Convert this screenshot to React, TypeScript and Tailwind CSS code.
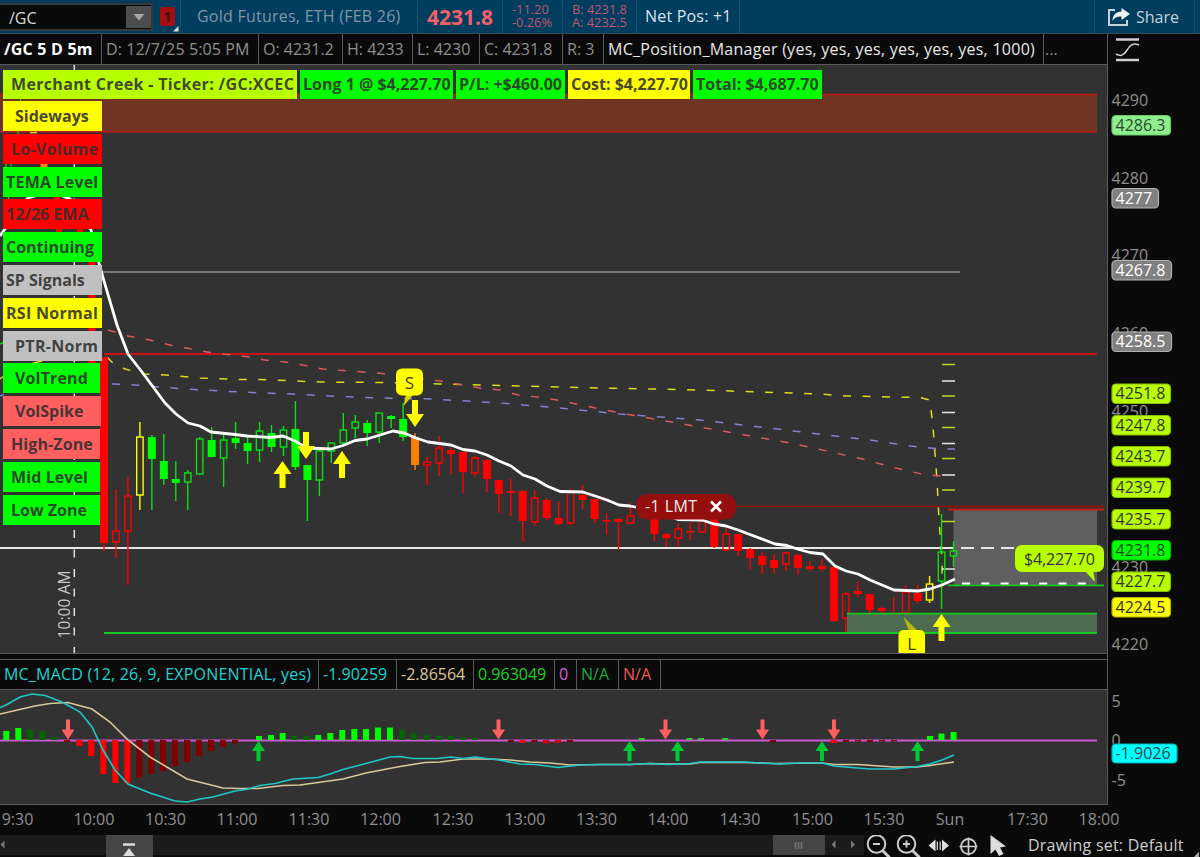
import React from 'react';
import clsx from 'clsx';

type Candle = [number, number, number, number, string, boolean];

const GREEN = '#08e010';
const RED = '#f00';

// high, body top, body bottom, low, colour, filled
const CANDLES: (Candle | null)[] = [
  [357, 357, 543, 551, RED, true],
  [489, 531, 542, 558, RED, false],
  [477, 496, 531, 585, RED, false],
  [422, 437, 495, 510, '#ff0', false],
  [435, 437, 459, 510, GREEN, true],
  [434, 461, 479, 485, GREEN, true],
  [461, 479, 483, 501, GREEN, true],
  [470, 473, 482, 510, GREEN, false],
  [437, 439, 474, 474, GREEN, false],
  [427, 440, 457, 457, GREEN, true],
  [432, 440, 458, 487, GREEN, false],
  [422, 438, 443, 449, GREEN, true],
  [435, 443, 451, 464, GREEN, true],
  [422, 431, 450, 462, GREEN, false],
  [425, 433, 447, 452, GREEN, true],
  [426, 430, 447, 456, GREEN, false],
  [401, 429, 467, 470, GREEN, true],
  [465, 465, 480, 521, GREEN, true],
  [449, 451, 480, 496, GREEN, false],
  [443, 443, 451, 463, GREEN, false],
  [413, 430, 443, 445, GREEN, false],
  [415, 422, 428, 438, GREEN, false],
  [420, 423, 433, 446, GREEN, true],
  [413, 413, 432, 443, GREEN, false],
  [415, 416, 419, 428, GREEN, true],
  [403, 419, 437, 441, GREEN, true],
  [433, 437, 465, 470, '#ff7f00', true],
  [457, 462, 465, 485, RED, false],
  [436, 448, 463, 476, RED, false],
  [448, 450, 454, 474, RED, true],
  [452, 452, 472, 493, RED, true],
  [456, 458, 473, 477, RED, false],
  [459, 460, 479, 492, RED, true],
  [480, 480, 494, 513, RED, true],
  [479, 491, 493, 516, RED, true],
  [490, 491, 521, 542, RED, true],
  [490, 498, 522, 526, RED, false],
  [498, 500, 518, 520, RED, true],
  [501, 518, 524, 525, RED, true],
  [489, 491, 523, 525, RED, false],
  [485, 495, 500, 509, RED, true],
  [499, 499, 519, 523, RED, true],
  [513, 520, 521.5, 535, RED, true],
  [519, 519, 522, 550, RED, true],
  [503, 516, 523, 524, RED, false],
  null,
  [515, 515, 534, 541, RED, true],
  [533, 534, 538, 547, RED, true],
  [523, 529, 538, 546, RED, false],
  [522, 531, 532.5, 540, RED, true],
  [519, 521, 532, 533, RED, false],
  [518, 518, 547, 548, RED, true],
  [528, 534, 550, 551, RED, false],
  [534, 534, 551, 556, RED, true],
  [548, 549, 558, 569, RED, true],
  [552, 556, 565, 574, RED, true],
  [554, 560, 568, 574, RED, true],
  [552, 553, 564, 571, RED, false],
  [554, 555, 568, 575, RED, true],
  [561, 566, 569, 571, RED, true],
  [559, 566, 569, 571, RED, true],
  [567, 567, 621, 622, RED, true],
  [592, 594, 618, 632, RED, false],
  [582, 591, 594, 597, RED, true],
  [594, 594, 610, 613, RED, true],
  [607, 608, 611, 621, RED, true],
  [597, 613, 617, 618, RED, true],
  [585, 592, 613, 614, RED, false],
  [585, 593, 601, 603, RED, true],
  [576, 584, 600, 603, '#ff0', false],
  [514, 552, 581, 609, GREEN, false],
  [541, 551, 556, 567, GREEN, false],
];

const candleX = (i: number) => 104 + i * 11.965;

const MA =
  '0,236 5,229 14,212 28,198 45,193 58,194 70,199 82,213 91,230 99,263 104,281 117,325 128,354 142,372 165,403 176,414 188,423 200,426 211,432 235,434.5 247,436 270,437.5 283,436 295,441 307,448 331,449 343,445.5 355,440.5 367,439 380,435 393,431 404,433 416,438 428,442 451,445 463,449.5 475,451 487,455 499,461 511,466 523,475 535,479 547,486 560,491.5 583,492 607,500 619,505 630,506 660,512 678,519.5 702,520 714,524 726,526 738,530 775,544 787,545.5 799,549.5 810,552.5 823,554 835,566 846,571 858,574 870,580 894,590 918,591 930,589 942,585 955,579';

const RED_AVG =
  '108,330 128,336 150,340 170,345 210,352.5 250,357 265,360 285,362 305,365.5 323,369 343,370.5 382,373.5 440,381 480,388 500,390 518,395 537,397 557,400 620,413 700,427 773,440 790,443 827,451 846,455.5 863,459 884,465 904,470 924,474.5 942,476';
const YELLOW_AVG =
  '107,357 113,363 125,369 145,374 165,375 200,378 240,379.5 260,379.5 320,382 380,382.5 440,384 500,385.5 600,388 700,390 820,394 845,396 920,397.5 930,400 933,427 937,480 939,520 942,560 942,580';
const BLUE_AVG =
  '112,384 135,385 185,389 240,392 291,394 330,396 380,398 430,399 500,403 560,408 620,414 700,420 760,427 827,435 870,440 910,446 930,448 942,449 955,449';

const TOP_TAGS = [
  { text: 'Merchant Creek - Ticker: /GC:XCEC', cls: 'w-[294px] bg-[#b8ff00] pl-2 tracking-[0.33px]' },
  { text: 'Long 1 @ $4,227.70', cls: 'w-[153px] bg-[#0f0] pl-[3px]' },
  { text: 'P/L: +$460.00', cls: 'w-[109px] bg-[#0f0] pl-[3px]' },
  { text: 'Cost: $4,227.70', cls: 'w-[122px] bg-[#ff0] pl-[3px]' },
  { text: 'Total: $4,687.70', cls: 'w-[129px] bg-[#0f0] pl-[3px]' },
];

const SIDE_TAGS = [
  { text: 'Sideways', cls: 'bg-[#ff0] w-[99px] pl-3' },
  { text: 'Lo-Volume', cls: 'bg-[#f00] w-[99px] pl-2 tracking-[0.25px]' },
  { text: 'TEMA Level', cls: 'bg-[#0f0] w-[99px] pl-[3px] tracking-[0.2px]' },
  { text: '12/26 EMA', cls: 'bg-[#f00] w-[99px] pl-[3px]' },
  { text: 'Continuing', cls: 'bg-[#0f0] w-[99px] pl-[3px]' },
  { text: 'SP Signals', cls: 'bg-[#c0c0c0] w-[99px] pl-[3px]' },
  { text: 'RSI Normal', cls: 'bg-[#ff0] w-[99px] pl-[3px] tracking-[0.3px]' },
  { text: 'PTR-Norm', cls: 'bg-[#c0c0c0] w-[99px] pl-3 tracking-[0.3px]' },
  { text: 'VolTrend', cls: 'bg-[#0f0] w-[97px] pl-3 tracking-[0.15px]' },
  { text: 'VolSpike', cls: 'bg-[#ff5f5f] w-[98px] pl-3' },
  { text: 'High-Zone', cls: 'bg-[#ff5f5f] w-[97px] pl-2 tracking-[0.1px]' },
  { text: 'Mid Level', cls: 'bg-[#0f0] w-[97px] pl-2 tracking-[0.1px]' },
  { text: 'Low Zone', cls: 'bg-[#0f0] w-[97px] pl-2' },
];

// x, height (negative = below zero), colour
const HIST: [number, number, string][] = [
  [6.3, 9, '#0f0'], [18.3, 12, '#0f0'], [30.3, 11, '#006400'], [42.3, 9, '#006400'], [54, 3, '#006400'],
  [67, -2, '#8b0000'], [79.3, -6, '#f00'], [91.3, -16, '#f00'], [103.3, -34, '#f00'], [115.3, -43, '#f00'],
  [127.3, -43, '#f00'], [139.3, -38, '#7f0000'], [151.3, -34, '#7f0000'], [163, -31, '#7f0000'],
  [175, -26, '#7f0000'], [187, -22, '#7f0000'], [199, -16, '#7f0000'], [211, -11, '#7f0000'],
  [223, -7, '#7f0000'], [235, -3, '#7f0000'], [259, 4, '#0f0'], [271, 5, '#0f0'], [282.7, 7, '#0f0'],
  [294.5, 4, '#006400'], [306.5, 4, '#006400'], [318.3, 5, '#0f0'], [330.3, 7, '#0f0'], [342.3, 10, '#0f0'],
  [354.3, 11, '#0f0'], [366, 11, '#0f0'], [378, 12.5, '#0f0'], [390, 12.5, '#0f0'], [402, 10, '#006400'],
  [413.7, 7, '#006400'], [427, 5, '#006400'], [439, 4, '#006400'], [451, 4, '#006400'], [463, 3, '#006400'],
  [475, 2, '#006400'], [511, -2, '#7f0000'], [522.5, -3, '#f00'], [534.5, -2, '#7f0000'], [546, -3.5, '#d00000'],
  [558, -3, '#d00000'], [570, -2, '#7f0000'], [641.7, 2, '#2fd02f'], [689.5, 2, '#2fd02f'], [701, 2, '#2fd02f'],
  [725.3, 2, '#2fd02f'], [773, -2, '#7f0000'], [834, -3, '#f00'], [846, -2, '#7f0000'], [858, -1.5, '#7f0000'],
  [870, -2, '#7f0000'], [882, -1.5, '#7f0000'], [894, -1.5, '#7f0000'], [930, 4, '#0f0'], [941.5, 6.5, '#0f0'],
  [953.5, 8, '#0f0'],
];

const MACD_LINE =
  '0,707.5 8,704 20,697 32,694 45,695.5 62,702 80,712 92,727 103,750 115,770 128,784 150,793 175,801 187,802 200,799 213,797 235,791 248,789 260,785.5 275,783.5 293,779 318,777.5 330,774 343,769.5 366,763.5 390,757 400,756.5 413,758.5 437,758.5 451,757 463,758.5 475,757 499,760 520,764 535,764.5 558,767.5 580,765 600,764.5 630,764.5 650,763.5 668,764.5 690,763.5 700,762 745,762 760,763 780,764 800,763 822,763 834,766 870,769 894,769 917,766.5 930,764 942,760 954,755';
const SIGNAL_LINE =
  '0,714 35,706 50,703.5 68,702.5 92,709 110,722 128,740 150,757 187,779 223,788 240,788.5 258,788.5 283,785.5 300,785 343,779 366,773 400,766.5 425,762.5 440,762 463,759 490,759 510,760 530,762 550,763 570,765 600,764.5 630,764.5 650,763.5 668,764 690,764 700,762.5 745,762.5 775,763.5 822,763 834,764.5 858,764.5 894,767 917,767 930,765.5 954,762';

const PRICES = [
  { y: 100, text: '4290' }, { y: 178, text: '4280' }, { y: 255, text: '4270' }, { y: 333, text: '4260' },
  { y: 411, text: '4250' }, { y: 567, text: '4230' }, { y: 644, text: '4220' },
];

const PRICE_TAGS = [
  { y: 125, text: '4286.3', fill: '#90ee90', stroke: '#66cc66', color: '#2b4a2b', w: 59 },
  { y: 198, text: '4277', fill: '#808080', stroke: '#b0b0b0', color: '#fff', w: 47 },
  { y: 270, text: '4267.8', fill: '#808080', stroke: '#b0b0b0', color: '#fff', w: 60 },
  { y: 341.5, text: '4258.5', fill: '#808080', stroke: '#b0b0b0', color: '#fff', w: 60 },
  { y: 393.5, text: '4251.8', fill: '#b8ff00', stroke: '#86bd00', color: '#333', w: 59 },
  { y: 425, text: '4247.8', fill: '#b8ff00', stroke: '#86bd00', color: '#333', w: 59 },
  { y: 456, text: '4243.7', fill: '#b8ff00', stroke: '#86bd00', color: '#333', w: 59 },
  { y: 487.5, text: '4239.7', fill: '#b8ff00', stroke: '#86bd00', color: '#333', w: 59 },
  { y: 519, text: '4235.7', fill: '#b8ff00', stroke: '#86bd00', color: '#333', w: 59 },
  { y: 550, text: '4231.8', fill: '#00ff00', stroke: '#00b400', color: '#1c4a1c', w: 59 },
  { y: 581.5, text: '4227.7', fill: '#b8ff00', stroke: '#86bd00', color: '#333', w: 59 },
  { y: 607, text: '4224.5', fill: '#ffff00', stroke: '#b4b400', color: '#333', w: 59 },
];

const TIMES: [number, string][] = [
  [17.5, '9:30'], [94, '10:00'], [165.5, '10:30'], [237, '11:00'], [309, '11:30'], [380.5, '12:00'],
  [453, '12:30'], [525, '13:00'], [596.5, '13:30'], [668, '14:00'], [740, '14:30'], [812.5, '15:00'],
  [884, '15:30'], [950, 'Sun'], [1027.5, '17:30'], [1099, '18:00'],
];

function YellowArrow({ x, y, down }: { x: number; y: number; down?: boolean }) {
  return (
    <path
      transform={`translate(${x} ${y})${down ? ' scale(1 -1)' : ''}`}
      d="M0 0L9 13H3V27H-3V13H-9Z"
      fill="#ff0"
    />
  );
}

function SmallArrow({ x, down }: { x: number; down?: boolean }) {
  return (
    <path
      transform={down ? `translate(${x} 739.5) scale(1 -1)` : `translate(${x} 741)`}
      d="M0 0L6.5 10H2V20H-2V10H-6.5Z"
      fill={down ? '#ff5f5f' : '#00c832'}
    />
  );
}

function TopBar() {
  return (
    <header className="flex h-[34px] shrink-0 border-b border-[#3a4a55] bg-[#003d5f] text-base whitespace-nowrap">
      <div className="mt-[3px] flex h-[28px] w-[153px] border-2 border-l-0 border-[#34383c] bg-[#0a0a0a]">
        <span className="flex-1 pl-[9px] leading-[26px] text-[#d8d8d8]">/GC</span>
        <span className="mt-px flex h-[22px] w-[25px] items-center justify-center bg-[#4d4d4d]">
          <svg width="12" height="7"><path d="M0.5 0H11.5L6 6.5Z" fill="#a8a8a8" /></svg>
        </span>
      </div>
      <div className="flex w-[28px] border-r border-[#14506f]">
        <div className="mt-[7px] ml-[7px] flex h-[19px] w-[15px] items-center justify-center rounded-[3px] bg-[#a50f12] text-[15px] font-bold text-[#4a1012]">1</div>
        <svg width="6" height="6" className="mt-[26px] -ml-0.5 shrink-0"><path d="M5.5 0V5.5H0Z" fill="#ddd" /></svg>
      </div>
      <div className="w-[237px] border-r border-[#14506f] pl-4 leading-[33px] tracking-[0.24px] text-[#8197a6]">Gold Futures, ETH (FEB 26)</div>
      <div className="w-[85px] border-r border-[#14506f] pl-[9px] text-[21px] leading-[35px] font-bold text-[#f25f68]">4231.8</div>
      <div className="w-[60px] border-r border-[#14506f] pt-[3px] pl-[9px] text-[12.8px] leading-[13px] text-[#c05570]">
        <div>-11.20</div>
        <div>-0.26%</div>
      </div>
      <div className="w-[74px] border-r border-[#14506f] pt-[3px] pl-[9px] text-[12.8px] leading-[13px] text-[#c05570]">
        <div>B: 4231.8</div>
        <div>A: 4232.5</div>
      </div>
      <div className="w-[103px] border-r border-[#14506f] pl-2 leading-[33px] tracking-[0.2px] text-[#dbe4ea]">Net Pos: +1</div>
      <div className="flex-1" />
      <div className="flex w-[101px] items-center border-x border-[#14506f] pl-3 text-[#c5d0d8]">
        <svg width="24" height="20" viewBox="0 0 24 20" className="mr-[5px]">
          <path d="M8 3H2V18H20V13" fill="none" stroke="#c5d0d8" strokeWidth="2" />
          <path d="M14.5 1L23 7L14.5 13V9.5C10 9.5 7.500 10.500 5.500 14C5.500 8 9 4.800 14.500 4.500Z" fill="#eef2f5" />
        </svg>
        Share
      </div>
      <div className="w-[5px]" />
    </header>
  );
}

function InfoRow() {
  const cell = 'shrink-0 border-r border-[#5a5a5a] pl-1 overflow-hidden';
  return (
    <div className="flex h-[31px] border-b border-[#5a5a5a] bg-[#0a0a0a] text-base leading-[30px] whitespace-nowrap text-[#8f8f8f]">
      <div className={clsx(cell, 'w-[102px] font-bold tracking-[0.2px] text-white')}>/GC 5 D 5m</div>
      <div className={clsx(cell, 'w-[157px] tracking-[0.12px]')}>D: 12/7/25 5:05 PM</div>
      <div className={clsx(cell, 'w-[84px]')}>O: 4231.2</div>
      <div className={clsx(cell, 'w-[70px]')}>H: 4233</div>
      <div className={clsx(cell, 'w-[67px]')}>L: 4230</div>
      <div className={clsx(cell, 'w-[83px]')}>C: 4231.8</div>
      <div className={clsx(cell, 'w-[41px]')}>R: 3</div>
      <div className={clsx(cell, 'w-[440px] tracking-[0.26px] text-[#e8e8e8]')}>MC_Position_Manager (yes, yes, yes, yes, yes, yes, 1000)</div>
      <div className="pl-px">...</div>
    </div>
  );
}

function PriceChart() {
  return (
    <div className="relative h-[589px] overflow-hidden border-b border-[#5a5a5a] bg-[#323232]">
      <svg className="absolute inset-0" width="1107" height="588" viewBox="0 65 1107 588">
        {/* supply / demand zones */}
        <rect x="0" y="95" width="1097" height="36.500" fill="#703423" />
        <path d="M0 94.500H1097M0 131.800H1097" stroke="#c01818" strokeWidth="1.5" />
        <rect x="953.500" y="510" width="143.500" height="75" fill="#5f5f5f" />

        {/* session divider */}
        <path d="M74.300 65V653" stroke="#e0e0e0" strokeWidth="1.5" strokeDasharray="8 11.500" strokeDashoffset="3" />
        <text x="0" y="0" transform="translate(69.500 638.500) rotate(-90)" fontSize="15.500" fill="#c8c8c8" textLength="68">10:00 AM</text>

        {/* horizontal levels */}
        <path d="M100 272H960" stroke="#8a8a8a" strokeWidth="1.3" />
        <path d="M104 354H1097" stroke="#c81414" strokeWidth="1.8" />
        <path d="M700 506.500H1104" stroke="#981010" strokeWidth="1.5" />
        <path d="M948 509.500H1104" stroke="#c01c1c" strokeWidth="2.200" />

        {/* bars hidden behind the left tags */}
        <rect x="88.500" y="262" width="7" height="110" fill="#f00" />
        <path d="M44 160V172" stroke="#ff7f00" strokeWidth="7" />
        <path d="M57 196V201M59 229V234M80 229V234" stroke="#f00" strokeWidth="6" />
        <path d="M20.500 95V103M18 130V135M6 163V168M11 163V168M8.500 196V201" stroke={GREEN} strokeWidth="1.2" />
        <path d="M30 132.500H37M0 379L4 376M30 364L42 361" stroke="#dcdc1e" strokeWidth="1.500" />
        <path d="M0 344L4 342" stroke={GREEN} strokeWidth="1.500" />
        <path d="M0 396L4 394.500" stroke="#8282d2" strokeWidth="1.500" />

        <path d="M0 548H954" stroke="#e6e6e6" strokeWidth="1.800" />
        <path d="M961 548H1015" stroke="#e6e6e6" strokeWidth="1.800" strokeDasharray="13 7" />

        <polyline points={BLUE_AVG} fill="none" stroke="#8282d2" strokeWidth="1.500" strokeDasharray="8 11.500" />
        <polyline points={YELLOW_AVG} fill="none" stroke="#dcdc1e" strokeWidth="1.500" strokeDasharray="8 11.500" />
        <polyline points={RED_AVG} fill="none" stroke="#dc5a5f" strokeWidth="1.500" strokeDasharray="8 11.500" />

        {/* ladder ticks */}
        <path d="M942 364.500H955M942 396H955M942 427.500H955M942 458.500H955M942 490H955M942 521.500H955" stroke="#b4dc1e" strokeWidth="1.600" />
        <path d="M942 381H955M942 412.500H955M942 443.500H955M942 475H955M942 569H955" stroke="#e6e6e6" strokeWidth="1.600" />

        {CANDLES.map((c, i) => {
          if (!c) return null;
          const [hi, top, bot, lo, color, filled] = c;
          const x = candleX(i);
          const half = filled ? 4 : 3.2;
          return (
            <g key={i} stroke={color} strokeWidth="1.400">
              <path d={`M${x} ${hi}V${top}M${x} ${bot}V${lo}`} />
              {filled ? (
                <rect x={x - half} y={top} width={half * 2} height={bot - top} fill={color === GREEN ? '#0f0' : color} stroke="none" />
              ) : (
                <rect x={x - half} y={top} width={half * 2} height={bot - top} fill="none" />
              )}
            </g>
          );
        })}

        {/* demand zone */}
        <rect x="847" y="614" width="250" height="19" fill="#4d6b4f" />
        <path d="M847 613.700H1097M104 633H1097" stroke="#14c81e" strokeWidth="1.800" />
        <path d="M948 585.300H1104" stroke="#14c81e" strokeWidth="1.800" />
        <path d="M962 583.500H1095" stroke="#fff" strokeWidth="1.800" strokeDasharray="8 11.300" />

        <polyline points={MA} fill="none" stroke="#fff" strokeWidth="2.800" strokeLinejoin="round" />

        <YellowArrow x={282.500} y={461} />
        <YellowArrow x={342} y={451} />
        <YellowArrow x={941.500} y={614} />
        <YellowArrow x={306} y={459} down />
        <YellowArrow x={415} y={427} down />

        {/* trade bubbles */}
        <path d="M403.500 406L406 394H414Z" fill="#d8d800" />
        <rect x="396" y="368.500" width="27" height="27" rx="6" fill="#ff0" />
        <text x="409.500" y="389" fontSize="17" textAnchor="middle" fill="#404000">S</text>
        <path d="M903.500 617L909 631H918Z" fill="#b8b810" />
        <rect x="898.500" y="630" width="26.500" height="30" rx="5" fill="#ff0" />
        <text x="911.800" y="650" fontSize="17" textAnchor="middle" fill="#404000">L</text>

        <path d="M1084 570L1095 582L1093 570Z" fill="#b8ff00" />
        <rect x="1015" y="545" width="89" height="27" rx="7" fill="#b8ff00" />
        <text x="1024" y="565" fontSize="16" fill="#333" textLength="71">$4,227.70</text>

        <rect x="636" y="494" width="100" height="25.500" rx="11" fill="#960f0f" />
        <text x="645" y="511.500" fontSize="16" fill="#eee" textLength="52">-1 LMT</text>
        <path d="M711 501.500L721 511.500M721 501.500L711 511.500" stroke="#fff" strokeWidth="2.600" />
      </svg>

      <div className="relative flex flex-col items-start pt-[5px] pl-[3px] text-base leading-[28px] font-bold whitespace-nowrap text-[#303030]/90">
        <div className="flex gap-[3px]">
          {TOP_TAGS.map(t => (
            <div key={t.text} className={clsx('h-[29px]', t.cls)}>{t.text}</div>
          ))}
        </div>
        <div className="mt-[2px] flex flex-col gap-[2.800px]">
          {SIDE_TAGS.map(t => (
            <div key={t.text} className={clsx('h-[30px] leading-[30px]', t.cls)}>{t.text}</div>
          ))}
        </div>
      </div>
    </div>
  );
}

function MacdPanel() {
  const cell = 'shrink-0 border-r border-[#5a5a5a] pl-1 overflow-hidden';
  return (
    <>
      <div className="mt-[5px] flex h-[31px] border-y border-[#5a5a5a] bg-[#0a0a0a] text-base leading-[28px] whitespace-nowrap">
        <div className={clsx(cell, 'w-[319px] tracking-[0.2px] text-[#1ed2d2]')}>MC_MACD (12, 26, 9, EXPONENTIAL, yes)</div>
        <div className={clsx(cell, 'w-[78px] text-[#1ed2d2]')}>-1.90259</div>
        <div className={clsx(cell, 'w-[77px] text-[#dcc896]')}>-2.86564</div>
        <div className={clsx(cell, 'w-[81px] text-[#1ed21e]')}>0.963049</div>
        <div className={clsx(cell, 'w-[22px] text-[#dc5adc]')}>0</div>
        <div className={clsx(cell, 'w-[42px] text-[#14aa3c]')}>N/A</div>
        <div className={clsx(cell, 'w-[42px] text-[#f05a5a]')}>N/A</div>
      </div>
      <div className="h-[115px] border-b border-[#5a5a5a] bg-[#323232]">
        <svg className="block" width="1107" height="114" viewBox="0 690 1107 114">
          <path d="M0 740.500H1097" stroke="#c85ad2" strokeWidth="1.800" />
          {HIST.map(([x, h, color]) => (
            <rect key={x} x={x - 3} y={h > 0 ? 740 - h : 740} width="6" height={Math.abs(h)} fill={color} />
          ))}
          <polyline points={SIGNAL_LINE} fill="none" stroke="#d8c89a" strokeWidth="1.600" />
          <polyline points={MACD_LINE} fill="none" stroke="#1ec8c8" strokeWidth="1.600" />
          {[68, 498.5, 665.5, 762.5, 834].map(x => <SmallArrow key={x} x={x} down />)}
          {[258.5, 629.5, 677.5, 822, 917.5].map(x => <SmallArrow key={x} x={x} />)}
        </svg>
      </div>
    </>
  );
}

function PriceAxis() {
  return (
    <svg className="block" width="92" height="771" viewBox="1108 34 92 771" fontSize="16">
      <path d="M1116 39.500H1139M1116 60H1139" stroke="#d0d0d0" strokeWidth="2.600" />
      <path d="M1116 54C1121 57 1124 55 1127.500 49.500C1130.500 44 1133.500 43 1139 45" fill="none" stroke="#d0d0d0" strokeWidth="1.500" />
      {PRICES.map(p => (
        <text key={p.text} x="1111.500" y={p.y + 6} fill="#8f8f8f">{p.text}</text>
      ))}
      {PRICE_TAGS.map(t => (
        <g key={t.text}>
          <rect x="1112" y={t.y - 9.500} width={t.w - 0.5} height="19.500" rx="4" fill={t.fill} stroke={t.stroke} strokeWidth="1.200" />
          <text x="1115.500" y={t.y + 5.800} fill={t.color}>{t.text}</text>
        </g>
      ))}
      <text x="1111.500" y="707" fill="#8f8f8f">5</text>
      <text x="1111.500" y="746" fill="#8f8f8f">0</text>
      <text x="1111.500" y="785.500" fill="#8f8f8f">-5</text>
      <rect x="1112" y="744" width="65" height="19" rx="4" fill="#0ff" stroke="#00b4b4" strokeWidth="1.200" />
      <text x="1115.500" y="759" fill="#1c4a4a">-1.9026</text>
    </svg>
  );
}

function BottomBar() {
  return (
    <div className="flex h-[22px] items-stretch bg-[#0a0a0a] text-base whitespace-nowrap">
      <div className="flex h-5 w-[864px] bg-[#1b1b1b]">
        <svg width="106" height="20"><path d="M4.500 5.500V13.500L0.500 9.500Z" fill="#777" /></svg>
        <div className="flex h-[22px] w-[47px] justify-center bg-[#454545]">
          <svg width="14" height="22" className="-ml-0.5"><path d="M1 9.500H13" stroke="#ddd" strokeWidth="2.500" /><path d="M7 13L13 21H1Z" fill="#ddd" /></svg>
        </div>
        <div className="flex-1" />
        <div className="flex w-[52px] items-center justify-center bg-[#454545]">
          <svg width="10" height="9"><path d="M1.500 1V8M4.500 1V8M7.500 1V8" stroke="#777" strokeWidth="1.500" /></svg>
        </div>
        <svg width="39" height="20"><path d="M10.500 5.500V13.500L6.500 9.500ZM26 5.500V13.500L30 9.500Z" fill="#777" /></svg>
      </div>
      <svg width="150" height="22" viewBox="864 835 150 22" fill="none" stroke="#ccc" strokeWidth="2">
        <circle cx="876.500" cy="844" r="8.800" />
        <path d="M882.500 850.500L889.500 857.500" strokeWidth="3" />
        <path d="M873 844H880" />
        <circle cx="906.500" cy="844" r="8.800" />
        <path d="M912.500 850.500L919.500 857.500" strokeWidth="3" />
        <path d="M903 844H910M906.500 840.500V847.500" />
        <path d="M928.500 845.500L935.500 839.500V851.500ZM949 845.500L942 839.500V851.500Z" fill="#ddd" stroke="none" />
        <path d="M937.300 841.500V850M940.200 841.500V850" strokeWidth="1.300" />
        <circle cx="968.500" cy="846.500" r="7.500" strokeWidth="1.800" />
        <path d="M959.500 846.500H977.500M968.500 837.500V855.500" strokeWidth="1.700" />
        <path d="M990.500 835V854L995.500 849.500L999 856L1003.500 854L1000 847.500L1006 846.500Z" fill="#ddd" stroke="none" />
      </svg>
      <span className="ml-[14px] flex-1 leading-[21px] tracking-[0.22px] text-[#cfcfcf]">Drawing set: Default</span>
      <svg width="6" height="22"><path d="M0 22L5 16.500V22Z" fill="#aaa" /></svg>
    </div>
  );
}

export default function App() {
  return (
    <div className="flex h-[857px] w-[1200px] flex-col overflow-hidden bg-[#0a0a0a] font-['Open_Sans',sans-serif]">
      <TopBar />
      <div className="flex">
        <div className="w-[1108px] border-r border-[#5a5a5a]">
          <InfoRow />
          <PriceChart />
          <MacdPanel />
        </div>
        <PriceAxis />
      </div>
      <svg className="block shrink-0" width="1200" height="30" fontSize="16" fill="#8f8f8f" textAnchor="middle">
        {TIMES.map(([x, t]) => (
          <text key={t} x={x} y="19.500">{t}</text>
        ))}
      </svg>
      <BottomBar />
    </div>
  );
}
